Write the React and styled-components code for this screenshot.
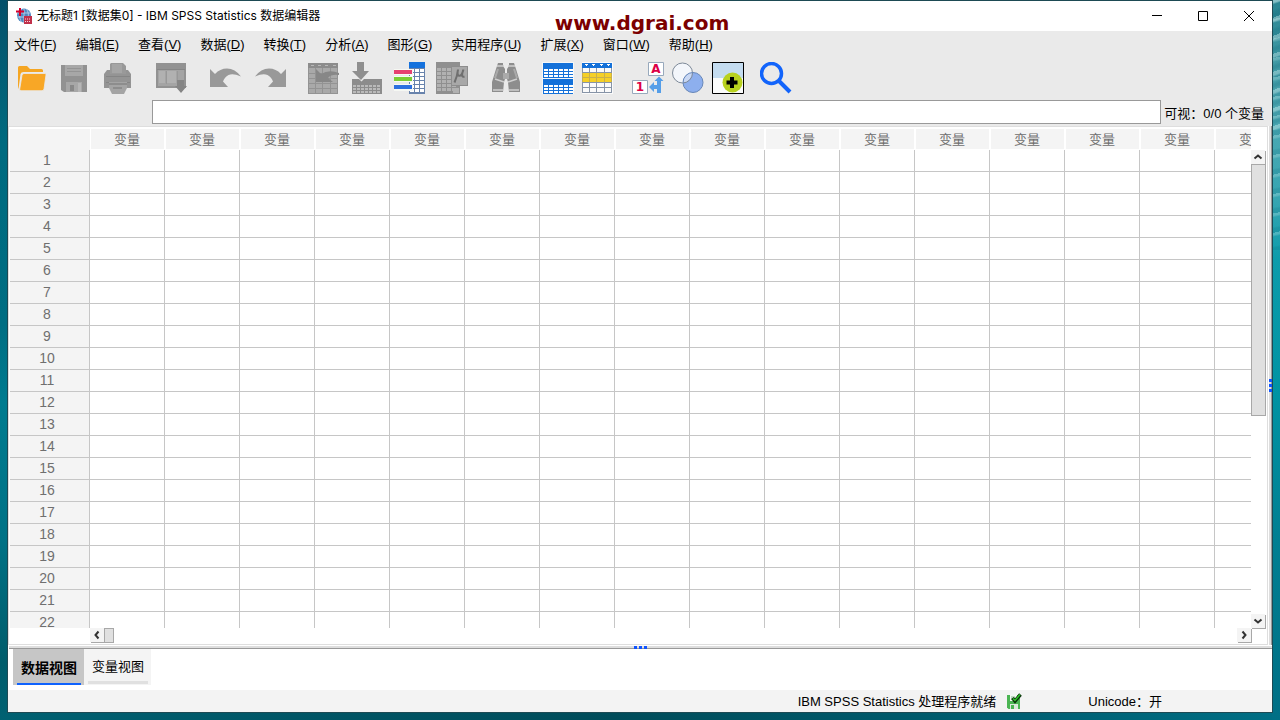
import React from 'react';
import styled, { createGlobalStyle, css } from 'styled-components';

const GlobalStyle = createGlobalStyle`
  * {
    box-sizing: border-box;
  }

  body {
    margin: 0;
    font-family: 'Liberation Sans', 'Noto Sans CJK SC', sans-serif;
    font-size: 13px;
    color: #000;
  }

  button, input {
    font: inherit;
    color: inherit;
    border-radius: 0;
  }
`;

const Desktop = styled.div`
  height: 100vh;
  padding: 1px 8px 8px;
  background:
    repeating-linear-gradient(160deg, rgba(210, 240, 240, 0.4) 0 3px, transparent 5px 9px, rgba(0, 90, 110, 0.2) 12px 14px, transparent 17px) right top / 8px 130px no-repeat,
    repeating-linear-gradient(168deg, rgba(210, 240, 240, 0.25) 0 2px, transparent 4px 13px, rgba(0, 90, 110, 0.15) 15px 19px) right top / 8px 250px no-repeat,
    linear-gradient(#2a8592, #4fa9b3 15%, #35a5b1 28%, #0c9cab 36%, #0093a3 55%, #007f92 75%, #006f85) right top / 8px 100% no-repeat,
    linear-gradient(#04506a, #006b80 20%, #016e83 45%, #007c90 56%, #007286 75%, #005c6b 92%, #006172) left top / 8px 100% no-repeat,
    linear-gradient(90deg, #006172, #005565 25%, #004c5a 48%, #005f72 80%, #006f85);
`;

const Window = styled.div`
  position: relative;
  height: 100%;
  display: flex;
  flex-direction: column;
  background: #fff;
  box-shadow: 0 0 0 1px #1d4a54;
`;

const Watermark = styled.div`
  position: absolute;
  top: 10px;
  left: 0;
  right: 0;
  padding-left: 4px;
  text-align: center;
  font: bold 20px/24px 'DejaVu Sans', sans-serif;
  color: #7c0000;
  pointer-events: none;
`;

const TitleBar = styled.header`
  display: flex;
  align-items: center;
  height: 30px;
  flex: none;
  padding-left: 8px;
`;

TitleBar.Text = styled.h1`
  flex: 1;
  margin: 0 0 0 5px;
  font: 12px/16px Inter, 'Noto Sans CJK SC', sans-serif;
`;

TitleBar.Button = styled.button`
  display: flex;
  align-items: center;
  justify-content: center;
  width: 46px;
  height: 30px;
  padding: 0;
  border: 0;
  background: none;
`;

const MenuBar = styled.nav`
  display: flex;
  gap: 19px;
  flex: none;
  height: 27px;
  padding: 0 6px;
  background: #eaeaea;
  line-height: 27px;
`;

MenuBar.Item = styled.a`
  color: #000;
  text-decoration: none;
  white-space: nowrap;
`;

const ToolBar = styled.div`
  display: flex;
  align-items: center;
  flex: none;
  height: 40px;
  padding: 0 8px;
  background: #eaeaea;
`;

ToolBar.Group = styled.div`
  display: flex;
  gap: ${({ $gap }) => $gap || 11}px;
  margin-right: ${({ $after }) => $after || 22}px;
`;

ToolBar.Button = styled.button`
  width: 32px;
  height: 32px;
  padding: 0;
  border: 0;
  background: none;

  svg {
    display: block;
  }
`;

const EditorRow = styled.div`
  display: flex;
  flex: none;
  align-items: center;
  gap: 3px;
  height: 28px;
  padding: 0 8px 0 144px;
  background: #eaeaea;
`;

EditorRow.Input = styled.input`
  flex: 1;
  min-width: 0;
  height: 24px;
  border: 1px solid #999;
  outline: 0;
  background: #fff;
`;

const Workspace = styled.main`
  display: flex;
  flex: 1;
  min-height: 0;
  background: #fff;
`;

const Pane = styled.section`
  flex: 1;
  min-width: 0;
  display: grid;
  grid-template-columns: minmax(0, 1fr) 16px;
  grid-template-rows: minmax(0, 1fr) 16px;
  padding: 2px 0 0 1px;
  border: 1px solid #dedede;
`;

const Viewport = styled.div`
  overflow: hidden;
`;

const Sheet = styled.table`
  width: 1280px;
  table-layout: fixed;
  border-collapse: separate;
  border-spacing: 0;

  th,
  td {
    padding: 0;
    font-weight: normal;
    border-right: 1px solid #c6c6c6;
    border-bottom: 1px solid #c6c6c6;
  }
`;

Sheet.Corner = styled.td`
  && {
    width: 80px;
    background: #f4f4f4;
    border-color: #f4f4f4;
  }
`;

Sheet.ColumnHead = styled.th`
  && {
    height: 21px;
    padding-right: 1px;
    line-height: 19px;
    border: 1px solid #fff;
    border-top: 0;
    background: #f4f4f4;
    color: #6f6f6f;
  }
`;

Sheet.RowHead = styled.th`
  && {
    height: 22px;
    padding-right: 5px;
    background: #f4f4f4;
    color: #6f6f6f;
    font-size: 14px;
    line-height: 21px;
  }
`;

const ScrollBar = styled.div`
  display: flex;
  ${({ $vertical }) => ($vertical
    ? css`
      flex-direction: column;
      width: 15px;
      margin-top: 21px;
    `
    : css`
      height: 15px;
      margin-left: 80px;
    `)}
`;

ScrollBar.Button = styled.button`
  display: flex;
  align-items: center;
  justify-content: center;
  flex: none;
  width: 14px;
  height: 14px;
  padding: 0;
  border: 0;
  background: #f4f4f4;
  box-shadow: 1px 1px 0 #a8a8a8;
`;

ScrollBar.Track = styled.div`
  display: flex;
  flex: 1;
  min-height: 0;
  flex-direction: ${({ $vertical }) => ($vertical ? 'column' : 'row')};
`;

ScrollBar.Thumb = styled.div`
  flex-basis: ${({ $size }) => $size};
  background: #e0e0e0;
  border: 1px solid #a8a8a8;
`;

const Splitter = styled.div`
  display: flex;
  flex: none;
  align-items: center;
  justify-content: center;
  gap: 2px;
  ${({ $vertical }) => ($vertical
    ? css`
      flex-direction: column;
      width: 4px;
      background: #dedede;
      border-left: 1px solid #fff;
      border-right: 1px solid #999;
    `
    : css`
      height: 4px;
      margin-left: 1px;
      border-top: 1px solid #fff;
      border-bottom: 1px solid #999;
      background: #dedede;
    `)}
`;

Splitter.Dot = styled.span`
  flex: none;
  width: 3px;
  height: 3px;
  background: #0f54ff;
`;

const TabBar = styled.div`
  display: flex;
  align-items: flex-start;
  flex: none;
  height: 41px;
  padding-left: 5px;
`;

TabBar.Tab = styled.button`
  height: 36px;
  padding: 0 3px 0 4px;
  border: 0;
  background: ${({ $active }) => ($active ? '#c6c6c6' : '#f4f4f4')};
  font-size: ${({ $active }) => ($active ? 14 : 13)}px;
  font-weight: ${({ $active }) => ($active ? 'bold' : 'normal')};
`;

TabBar.Label = styled.span`
  display: block;
  height: ${({ $active }) => ($active ? 36 : 34)}px;
  padding: 0 4px;
  line-height: ${({ $active }) => ($active ? 38 : 34)}px;
  border-bottom: ${({ $active }) => ($active ? '2px solid #0f62fe' : '3px solid #e0e0e0')};
`;

const StatusBar = styled.footer`
  display: flex;
  align-items: center;
  justify-content: flex-end;
  flex: none;
  height: 22px;
  padding: 0 110px 1px 0;
  background: #f3f3f3;
`;

StatusBar.Processor = styled.span`
  display: flex;
  align-items: center;
  gap: 10px;
  margin-right: 66px;
`;

const range = (from, to, step = 1) => {
  const out = [];
  for (let n = from; n <= to; n += step) out.push(n);
  return out;
};

const lines = (xs, ys, x1, y1, x2, y2) => (
  xs.map((x) => `M${x} ${y1}V${y2}`).concat(ys.map((y) => `M${x1} ${y}H${x2}`)).join('')
);

function Icon({ children, size = 32, ...props }) {
  return (
    <svg width={size} height={size} viewBox={`0 0 ${size} ${size}`} fill="none" aria-hidden="true" {...props}>
      {children}
    </svg>
  );
}

const AppIcon = () => (
  <Icon size={16}>
    <circle cx="8" cy="7.500" r="7" fill="#4f87c0" />
    <path d="M2 5h12M1 9h13M8 1v13M10.500 1c2.500 4 2.500 8 0 13M5.500 1c-2.500 4-2.500 9 0 13" stroke="#cfe2f3" strokeWidth=".7" />
    <path d="M4 0v8M0 3.500h8" stroke="#d6002c" strokeWidth="2" />
    <path d="M8 8h8v8H8z" fill="#c0304a" />
    <path d="M9 11h6M9 13.500h6" stroke="#f6d6dc" strokeDasharray="1 1" />
  </Icon>
);

const FolderIcon = () => (
  <Icon>
    <path d="M2 5.500Q2 4 3.500 4H11l3 3h11.500Q27 7 27 8.500V10H7.500Q5 10 4.500 12L2.500 27Q2 26 2 24z" fill="#f5a623" />
    <path d="M8 11.500h21q1.200 0 1 1.300L28 27q-.3 1.700-2 1.700H5q-1.500 0-1.300-1.500L6 13.200q.3-1.700 2-1.700z" fill="#f8a726" stroke="#eaeaea" strokeWidth=".8" />
  </Icon>
);

const SaveIcon = () => (
  <Icon>
    <path d="M2 3h26v27H5l-3-2z" fill="#929292" />
    <path d="M6 3h18v11H6z" fill="#a7a7a7" />
    <path d="M8 6.500h14M8 9.500h14" stroke="#949494" />
    <path d="M7 20h16v10H7z" fill="#a7a7a7" />
    <path d="M11 23h4v6h-4z" fill="#888" />
    <path d="M19 21h3v9h-3z" fill="#b6b6b6" />
  </Icon>
);

const PrintIcon = () => (
  <Icon>
    <path d="M9 1h12l3 3v9H8V2z" fill="#999" />
    <path d="M10 2h10v9H10z" fill="#a5a5a5" />
    <path d="M5 8h3v4h16V8h2l3 4v14H2V12z" fill="#949494" />
    <path d="M4 14.500h24M4 20.500h24" stroke="#858585" />
    <path d="M7 20h18v6l-3 6H10l-3-6z" fill="#a4a4a4" />
    <path d="M7 22h18M11 26h9" stroke="#858585" strokeWidth="1.500" />
  </Icon>
);

const DialogIcon = () => (
  <Icon>
    <path d="M0 1h30v25H0z" fill="#929292" />
    <path d="M2 8h26v16H2z" fill="#a4a4a4" />
    <path d="M1 7.500h28" stroke="#858585" />
    <path d="M3 9h6v12H3zM11 9h9v12h-9z" fill="#b1b1b1" />
    <path d="M10.500 9v13M21.500 9v13" stroke="#989898" />
    <path d="M21 18h7v6h3l-6 7-6-7h2z" fill="#858585" />
  </Icon>
);

const UndoIcon = ({ flip }) => (
  <Icon>
    <path
      d="M0 7l5 5Q10 6.500 17 6.500q8 0 14 8-8-3.500-12.500-1.500-4 2-5.500 6.500l5 5.500H0z"
      fill="#999"
      transform={flip ? 'translate(31 0) scale(-1 1)' : undefined}
    />
  </Icon>
);

const GotoCaseIcon = () => (
  <Icon shapeRendering="crispEdges">
    <path d="M1 1h30v31H1z" fill="#a9a9a9" />
    <path d="M1 1h30v5H1z" fill="#8c8c8c" />
    <path d={lines([1.5, 8.5, 15.5, 23.5, 30.5], [11.5, 16.5, 21.5, 26.5, 31.5], 1, 6, 31, 32)} stroke="#939393" />
    <path d="M4 3.500h3M11 3.500h3M18 3.500h3M26 3.500h3" stroke="#b8b8b8" />
    <path d="M9 7l5 5q8-5 18-1v2q-8-1-11 3l5 4H9z" fill="#878787" shapeRendering="auto" />
  </Icon>
);

const GotoVariableIcon = () => (
  <Icon>
    <path d="M7 0h7v9h5l-8 9-9-9h5z" fill="#8f8f8f" />
    <path d="M2 17h7l2.500 2.500L14 17h18v15H2z" fill="#8c8c8c" />
    <path d={range(0, 6).map((c) => `M${3 + c * 4} 23h3v2h-3zM${3 + c * 4} 26h3v2h-3zM${3 + c * 4} 29h3v2h-3z`).join('')} fill="#bababa" />
  </Icon>
);

const VariablesIcon = () => (
  <Icon shapeRendering="crispEdges">
    <path d="M16 0h16v32H16z" fill="#fff" />
    <path d="M16 0h16v6H16z" fill="#1471dd" />
    <path d={lines([16.5, 21.5, 26.5, 31.5], range(6.5, 31.5, 4).concat(31.5), 16, 6, 32, 32)} stroke="#6883ac" />
    <path d="M1 7h19v6H1zM1 14h19v6H1zM1 22h19v7H1z" fill="#f6f8f3" />
    <path d="M1 8h18v4H1z" fill="#e64070" />
    <path d="M1 15h18v4H1z" fill="#7bcd35" />
    <path d="M1 23h18v4H1z" fill="#2c70df" />
  </Icon>
);

const MuIcon = () => (
  <Icon>
    <path d="M0 0h24v32H0z" fill="#8f8f8f" />
    <path d={range(0, 3).map((c) => range(0, 5).map((r) => `M${1 + c * 5} ${6 + r * 4}h4v3h-4z`).join('')).join('')} fill="#b1b1b1" />
    <path d="M17 26h6v5h-6z" fill="#b1b1b1" />
    <path d="M15 4h17v20H15z" fill="#8d8d8d" />
    <path d="M16 5h15v18H16z" fill="#a8a8a8" />
    <path d="M22 7.500q-.5 6-3.500 13M22 8c-2 7 3 8 5 1M27.500 7.500c-2 5-2 8 1 7" stroke="#6f6f6f" strokeWidth="2" />
  </Icon>
);

const FindIcon = () => (
  <Icon>
    <path d="M8 1h5v3l2 3v10l-1 3-1 10H2V20L6 7z" fill="#8d8d8d" />
    <path d="M24 1h-5v3l-2 3v10l1 3 1 10h11V20L26 7z" fill="#8d8d8d" />
    <path d="M13 11h6v6h-6z" fill="#aaa" />
    <path d="M7 4h7M18 4h7M5 17l9 3M27 17l-9 3M3 28h10M19 28h10" stroke="#d0d0d0" strokeWidth="1.500" />
    <path d="M8 7L5 16M24 7l3 9" stroke="#aaa" strokeWidth="2" />
  </Icon>
);

const SplitFileIcon = () => (
  <Icon shapeRendering="crispEdges">
    <path d="M0 0h32v32H0z" fill="#f5f7f8" />
    <path d="M1 1h30v15H1zM1 17h30v15H1z" fill="#1471d9" />
    <path d={range(0, 5).map((c) => [7, 10, 13, 23, 26, 29].map((r) => `M${2 + c * 5} ${r}h4v2h-4z`).join('')).join('')} fill="#fff" />
  </Icon>
);

const SelectCasesIcon = () => (
  <Icon shapeRendering="crispEdges">
    <path d="M0 0h31v32H0z" fill="#fafafa" />
    <path d="M0 1h30v5H0z" fill="#1471d9" />
    <path d="M0 11h30v9H0z" fill="#f5d027" />
    <path d={lines([0.5, 7.5, 14.5, 22.5, 29.5], [15.5], 0, 11, 30, 20)} stroke="#c9b04a" />
    <path d={lines([0.5, 7.5, 14.5, 22.5, 29.5], [10.5], 0, 6, 30, 11)} stroke="#8794a7" />
    <path d={lines([0.5, 7.5, 14.5, 22.5, 29.5], [20.5, 25.5, 30.5], 0, 20, 30, 31)} stroke="#8794a7" />
    <path d="M2 2h4l-2 2zM9 2h4l-2 2zM17 2h4l-2 2zM24 2h4l-2 2z" fill="#fff" />
  </Icon>
);

const ValueLabelsIcon = () => (
  <Icon>
    <path d="M16.500.5h15v13h-15zM.5 18.500h15v13H.5z" fill="#fff" stroke="#98a9bc" />
    <text x="24" y="11" textAnchor="middle" fontFamily="DejaVu Sans, sans-serif" fontWeight="bold" fontSize="12" fill="#dc0046">A</text>
    <text x="8" y="29" textAnchor="middle" fontFamily="DejaVu Sans, sans-serif" fontWeight="bold" fontSize="12" fill="#dc0046">1</text>
    <path d="M27 14.500l4.500 4.500H29v12h-4v-4h-3v3l-5-5 5-5v3h3v-4h-2.500z" fill="#559ee8" />
  </Icon>
);

const VennIcon = () => (
  <Icon>
    <circle cx="10.500" cy="11" r="10" fill="#f3f6fb" />
    <circle cx="21" cy="20.500" r="10" fill="#8dafee" />
    <path d="M11.500 20.800A10 10 0 0 1 20.300 10.500 10 10 0 0 1 11.500 20.800z" fill="#c9d8f4" />
    <circle cx="10.500" cy="11" r="10" stroke="#7e8a99" />
    <circle cx="21" cy="20.500" r="10" stroke="#6787b8" />
  </Icon>
);

const CustomizeIcon = () => (
  <Icon>
    <path d="M.5.5h31v31H.5z" fill="#fbfcfc" />
    <path d="M1 1h30v15H1z" fill="#c4dcf0" />
    <circle cx="20.500" cy="20.500" r="10" fill="#b8d11f" />
    <path d="M20 15v11M14.500 20.500h11" stroke="#000" strokeWidth="4" />
    <path d="M.5.5h31v31H.5z" stroke="#000" />
  </Icon>
);

const SearchIcon = () => (
  <Icon>
    <circle cx="11.500" cy="11.500" r="10" stroke="#1264fb" strokeWidth="3.500" />
    <path d="M18.500 18.500l11.500 11.500" stroke="#1264fb" strokeWidth="4" />
  </Icon>
);

const SavedIcon = () => (
  <Icon size={16}>
    <path d="M1 2h13v14H2.500L1 14.500z" fill="#4bb553" />
    <path d="M4 2h7v6H4z" fill="#f2f8f2" />
    <path d="M5 4h4M5 6h3" stroke="#8fb893" />
    <path d="M4 11h8v5H4z" fill="#dbe8dc" />
    <path d="M5 12h3v4H5z" fill="#4bb553" />
    <path d="M6.500 5L9 8l5.500-6.500" stroke="#0a2f0b" strokeWidth="3.500" />
    <path d="M7 5.500L9 7.500l5-6" stroke="#2fc42a" strokeWidth="1.500" />
  </Icon>
);

const arrows = {
  up: 'M1.500 6.500L5 3.500l3.500 3',
  down: 'M1.500 3.500L5 6.500l3.500-3',
  left: 'M6.500 1.500L3.500 5l3 3.500',
  right: 'M3.500 1.500L6.500 5l-3 3.500',
};

function ScrollButton({ direction }) {
  return (
    <ScrollBar.Button type="button" aria-label={direction}>
      <Icon size={10}>
        <path d={arrows[direction]} stroke="#333" strokeWidth="2" />
      </Icon>
    </ScrollBar.Button>
  );
}

const menus = [
  ['文件', 'F'],
  ['编辑', 'E'],
  ['查看', 'V'],
  ['数据', 'D'],
  ['转换', 'T'],
  ['分析', 'A'],
  ['图形', 'G'],
  ['实用程序', 'U'],
  ['扩展', 'X'],
  ['窗口', 'W'],
  ['帮助', 'H'],
];

const toolGroups = [
  { tools: [['打开', <FolderIcon />], ['保存', <SaveIcon />], ['打印', <PrintIcon />]] },
  { tools: [['对话框', <DialogIcon />]] },
  { gap: 13, after: 20, tools: [['撤销', <UndoIcon />], ['重做', <UndoIcon flip />]] },
  {
    tools: [
      ['转到个案', <GotoCaseIcon />],
      ['转到变量', <GotoVariableIcon />],
      ['变量', <VariablesIcon />],
      ['统计', <MuIcon />],
    ],
  },
  { after: 20, tools: [['查找', <FindIcon />]] },
  { gap: 8, after: 18, tools: [['拆分文件', <SplitFileIcon />], ['选择个案', <SelectCasesIcon />]] },
  {
    gap: 8,
    after: 16,
    tools: [['值标签', <ValueLabelsIcon />], ['变量集', <VennIcon />], ['定制', <CustomizeIcon />]],
  },
  { tools: [['搜索', <SearchIcon />]] },
];

const columns = range(1, 16);
const rows = range(1, 22);

function DataSheet() {
  return (
    <Sheet>
      <thead>
        <tr>
          <Sheet.Corner />
          {columns.map((c) => <Sheet.ColumnHead key={c} scope="col">变量</Sheet.ColumnHead>)}
        </tr>
      </thead>
      <tbody>
        {rows.map((r) => (
          <tr key={r}>
            <Sheet.RowHead scope="row">{r}</Sheet.RowHead>
            {columns.map((c) => <td key={c} />)}
          </tr>
        ))}
      </tbody>
    </Sheet>
  );
}

function Handle({ vertical }) {
  return (
    <Splitter $vertical={vertical}>
      <Splitter.Dot />
      <Splitter.Dot />
      <Splitter.Dot />
    </Splitter>
  );
}

export default function App() {
  return (
    <Desktop>
      <GlobalStyle />
      <Window>
        <TitleBar>
          <AppIcon />
          <TitleBar.Text>无标题1 [数据集0] - IBM SPSS Statistics 数据编辑器</TitleBar.Text>
          <TitleBar.Button type="button" aria-label="最小化">
            <Icon size={10}><path d="M0 4.500h10" stroke="#000" /></Icon>
          </TitleBar.Button>
          <TitleBar.Button type="button" aria-label="最大化">
            <Icon size={10}><path d="M.5.5h9v9h-9z" stroke="#000" /></Icon>
          </TitleBar.Button>
          <TitleBar.Button type="button" aria-label="关闭">
            <Icon size={10}><path d="M0 0l10 10M10 0L0 10" stroke="#000" /></Icon>
          </TitleBar.Button>
        </TitleBar>

        <MenuBar>
          {menus.map(([name, key]) => (
            <MenuBar.Item key={key} href="#">
              {name}
              (
              <u>{key}</u>
              )
            </MenuBar.Item>
          ))}
        </MenuBar>

        <ToolBar>
          {toolGroups.map(({ gap, after, tools }) => (
            <ToolBar.Group key={tools[0][0]} $gap={gap} $after={after}>
              {tools.map(([label, icon]) => (
                <ToolBar.Button key={label} type="button" aria-label={label}>{icon}</ToolBar.Button>
              ))}
            </ToolBar.Group>
          ))}
        </ToolBar>

        <EditorRow>
          <EditorRow.Input id="cell" type="text" />
          <label htmlFor="cell">可视：0/0 个变量</label>
        </EditorRow>

        <Workspace>
          <Pane>
            <Viewport>
              <DataSheet />
            </Viewport>
            <ScrollBar $vertical>
              <ScrollButton direction="up" />
              <ScrollBar.Track $vertical>
                <ScrollBar.Thumb $size="56%" />
              </ScrollBar.Track>
              <ScrollButton direction="down" />
            </ScrollBar>
            <ScrollBar>
              <ScrollButton direction="left" />
              <ScrollBar.Track>
                <ScrollBar.Thumb $size="10px" />
              </ScrollBar.Track>
              <ScrollButton direction="right" />
            </ScrollBar>
          </Pane>
          <Handle vertical />
        </Workspace>
        <Handle />

        <TabBar>
          <TabBar.Tab type="button" $active>
            <TabBar.Label $active>数据视图</TabBar.Label>
          </TabBar.Tab>
          <TabBar.Tab type="button">
            <TabBar.Label>变量视图</TabBar.Label>
          </TabBar.Tab>
        </TabBar>

        <StatusBar>
          <StatusBar.Processor>
            IBM SPSS Statistics 处理程序就绪
            <SavedIcon />
          </StatusBar.Processor>
          <span>Unicode：开</span>
        </StatusBar>

        <Watermark>www.dgrai.com</Watermark>
      </Window>
    </Desktop>
  );
}
